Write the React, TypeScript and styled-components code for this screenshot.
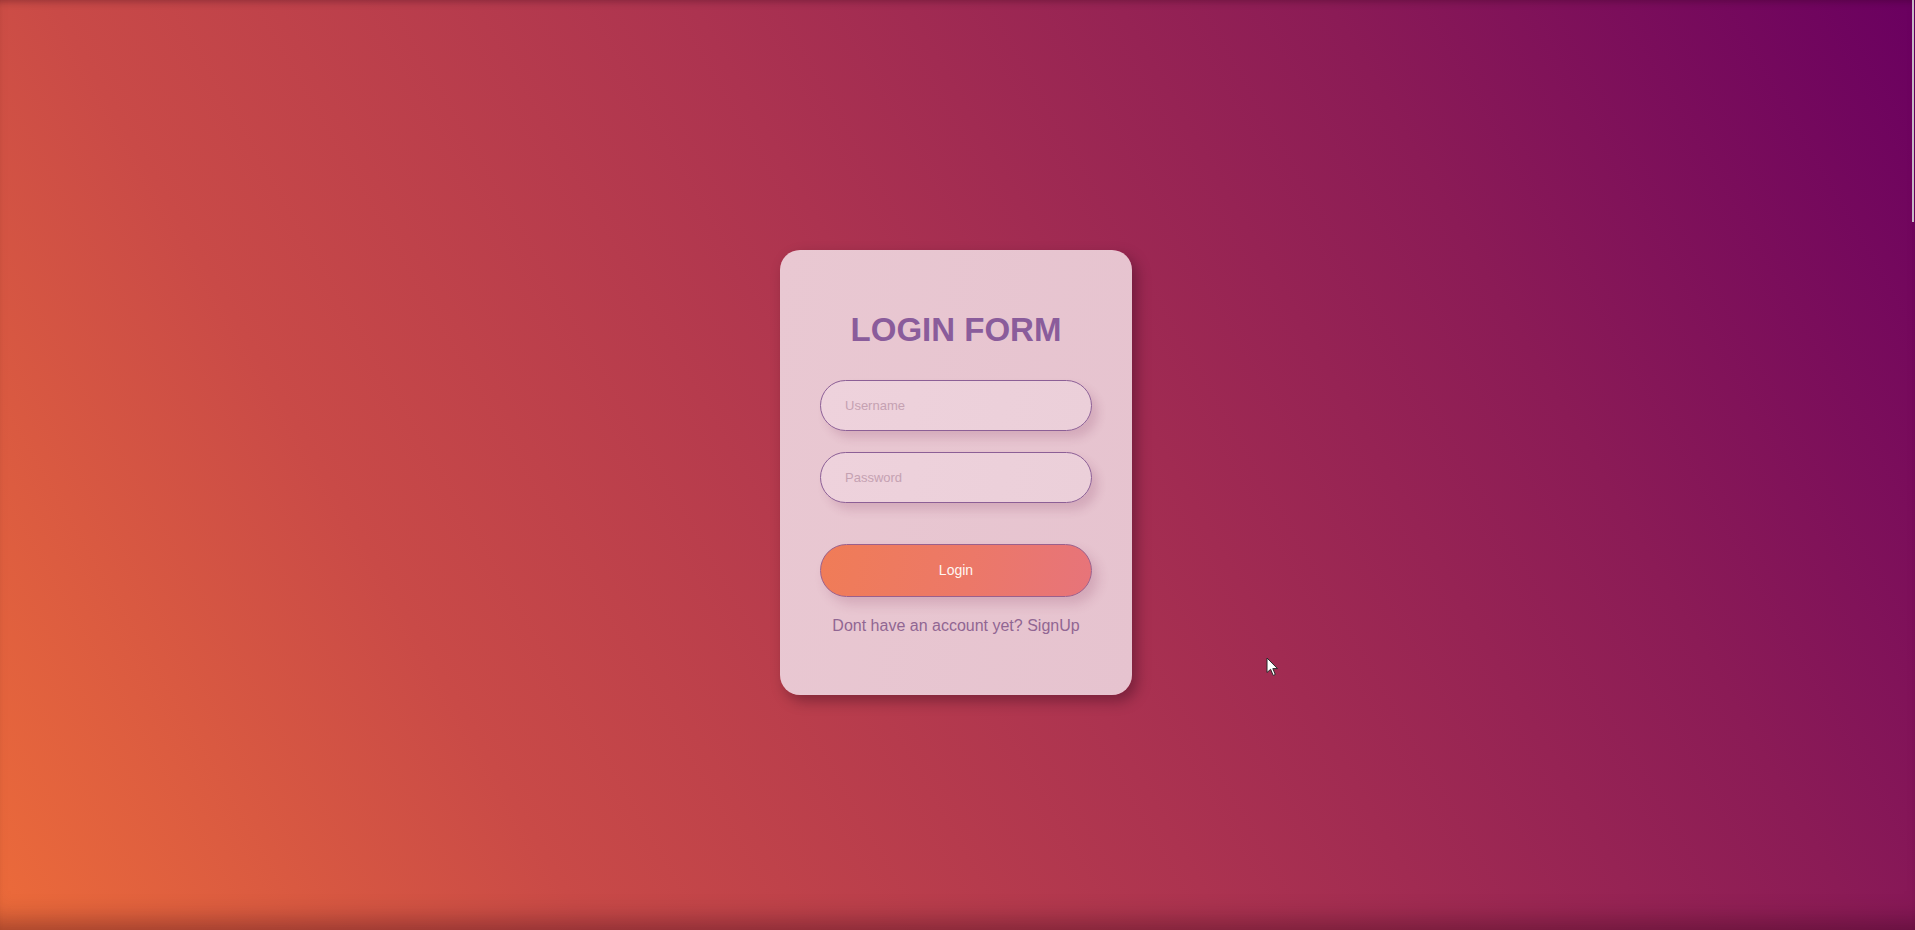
import React from "react";
import styled, { createGlobalStyle } from "styled-components";

const GlobalStyle = createGlobalStyle`
  html, body {
    margin: 0;
    padding: 0;
    height: 100%;
    overflow: hidden;
  }
  body {
    font-family: "Liberation Sans", Arial, sans-serif;
  }
  #root {
    height: 100%;
  }
  * { box-sizing: border-box; }
`;

const Page = styled.main`
  position: relative;
  height: 100vh;
  display: flex;
  align-items: center;
  justify-content: center;
  padding-top: 14px;
  padding-right: 3px;
  background: linear-gradient(60deg, #ec6b3a 0%, #c94a47 24%, #ac3350 50%, #8b1b56 76%, #6a0060 100%);
  box-shadow: inset 0 -28px 26px -20px rgba(40, 0, 20, 0.4),
    inset 0 7px 7px -5px rgba(40, 0, 20, 0.3);
`;

const Card = styled.form`
  width: 352px;
  padding: 61px 40px 60px;
  border-radius: 20px;
  background: linear-gradient(100deg, #e9c8d2 0%, #e6c3cf 100%);
  box-shadow: 5px 6px 14px rgba(30, 0, 20, 0.35);
  display: flex;
  flex-direction: column;
  align-items: stretch;
`;

const Title = styled.h2`
  margin: 0 0 32px;
  font-size: 33px;
  line-height: 37px;
  font-weight: 700;
  text-align: center;
  color: #8a5c9b;
  font-family: "Liberation Sans", Arial, sans-serif;
`;

const Field = styled.input<{ $gap: number }>`
  height: 51px;
  width: 100%;
  margin: 0 0 ${(p) => p.$gap}px;
  padding: 0 24px;
  border-radius: 26px;
  border: 1px solid #8c5f96;
  background: linear-gradient(100deg, #eed2dc 0%, #ebcfd9 100%);
  box-shadow: 6px 7px 10px rgba(120, 40, 80, 0.16);
  font-family: "Liberation Sans", Arial, sans-serif;
  font-size: 13px;
  color: #6a4a70;
  outline: none;
  &::placeholder {
    color: #c5a1b2;
  }
`;

const Submit = styled.button`
  height: 53px;
  width: 100%;
  border-radius: 27px;
  border: 1px solid #9a608c;
  background: linear-gradient(100deg, #f07c57 0%, #ec7868 55%, #e7747a 100%);
  box-shadow: 6px 7px 12px rgba(120, 40, 80, 0.18);
  color: #fff6f2;
  font-family: "Liberation Sans", Arial, sans-serif;
  font-size: 14px;
  cursor: pointer;
`;

const Footer = styled.p`
  margin: 20px 0 0;
  font-size: 16px;
  line-height: 18px;
  text-align: center;
  color: #916693;
  font-family: "Liberation Sans", Arial, sans-serif;
`;

const SignLink = styled.a`
  color: inherit;
  text-decoration: none;
`;

const ScrollThumb = styled.div`
  position: absolute;
  top: 0;
  right: 1px;
  width: 2px;
  height: 222px;
  background: #c9bcc6;
`;

const Pointer = styled.svg`
  position: absolute;
  left: 1266px;
  top: 657px;
  width: 13px;
  height: 20px;
`;

export default function App() {
  return (
    <>
      <GlobalStyle />
      <Page>
        <Card onSubmit={(e) => e.preventDefault()}>
          <Title>LOGIN FORM</Title>
          <Field $gap={21} type="text" placeholder="Username" />
          <Field $gap={41} type="password" placeholder="Password" />
          <Submit type="submit">Login</Submit>
          <Footer>
            Dont have an account yet? <SignLink href="#">SignUp</SignLink>
          </Footer>
        </Card>
        <ScrollThumb />
        <Pointer viewBox="0 0 13 20">
          <path
            d="M1 1 L1 15.5 L4.6 12.3 L7.2 18.4 L9.3 17.5 L6.8 11.6 L11.5 11.6 Z"
            fill="#ffffff"
            stroke="#2a2a2a"
            strokeWidth="1"
            strokeLinejoin="round"
          />
        </Pointer>
      </Page>
    </>
  );
}
